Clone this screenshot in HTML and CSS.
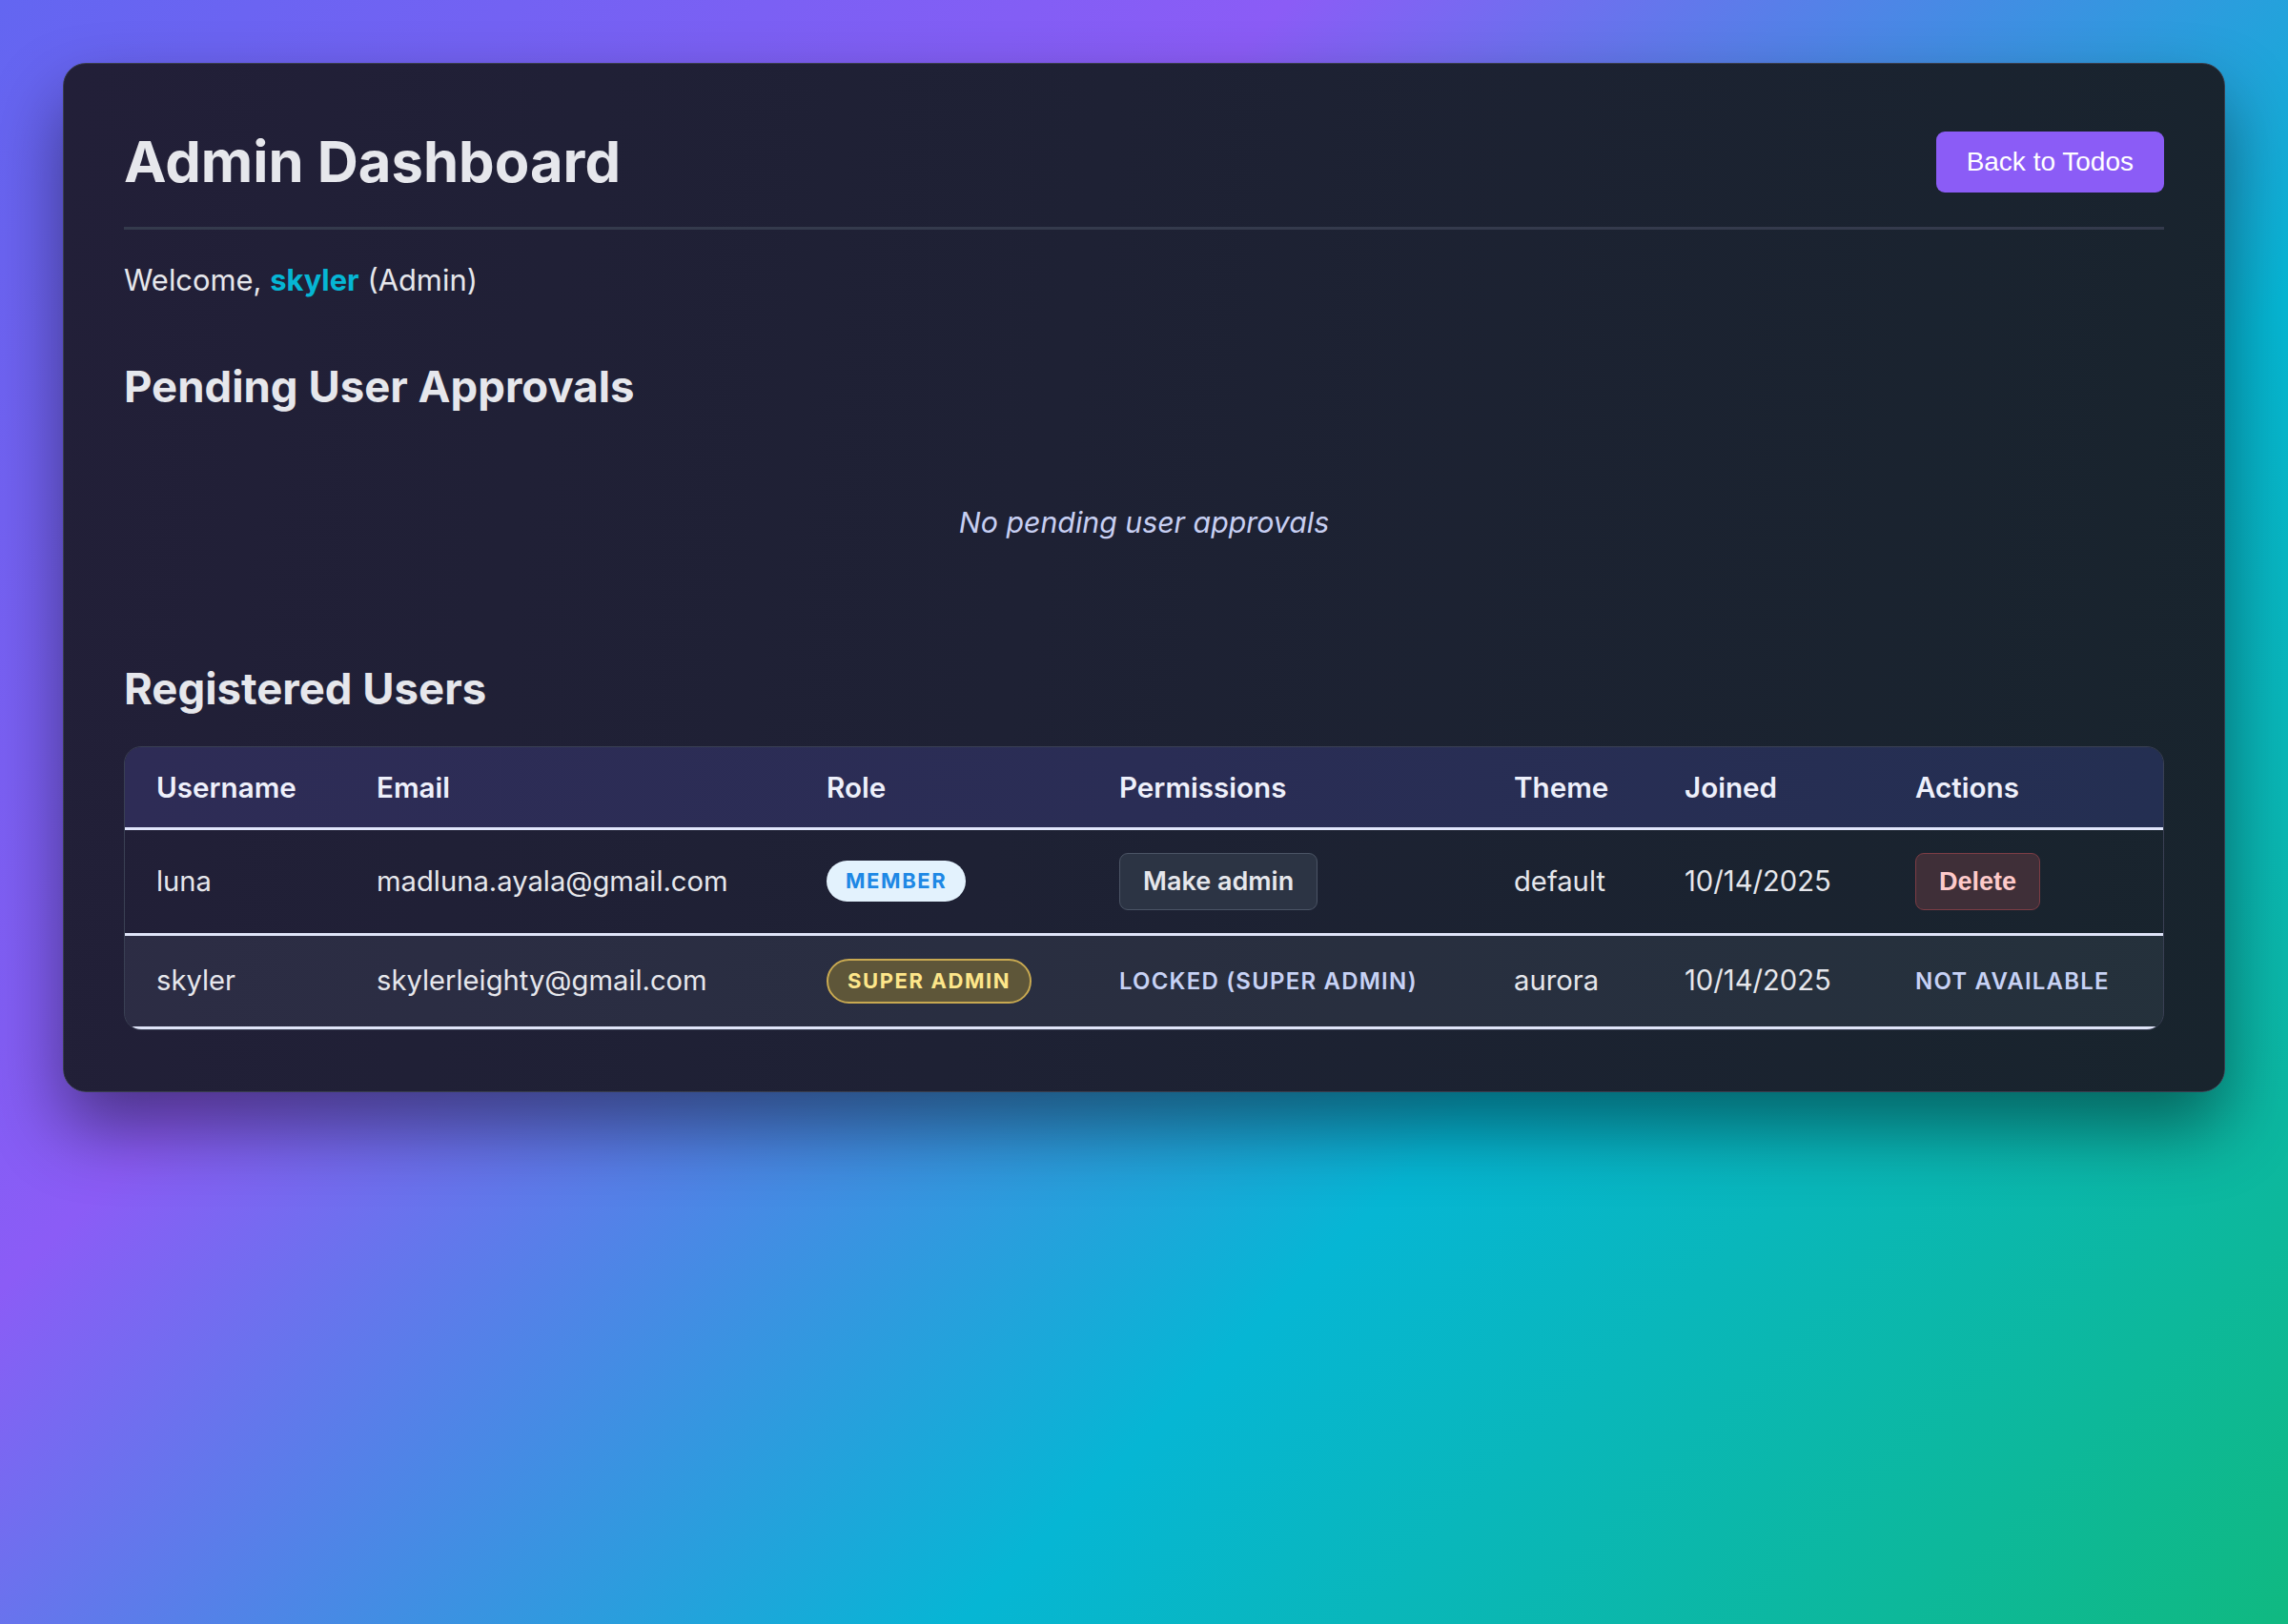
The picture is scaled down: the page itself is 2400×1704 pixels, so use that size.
FILE: index.html
```html
<!DOCTYPE html>
<html lang="en">
<head>
<meta charset="utf-8">
<title>Admin Dashboard</title>
<link rel="stylesheet" href="styles.css">
</head>
<body>
<main class="card">
  <header class="card-header">
    <h1 class="title">Admin Dashboard</h1>
    <button class="btn-back">Back to Todos</button>
  </header>
  <p class="welcome">Welcome, <span class="welcome-name">skyler</span> (Admin)</p>

  <section class="section">
    <h2 class="section-title">Pending User Approvals</h2>
    <p class="empty">No pending user approvals</p>
  </section>

  <section class="section section-users">
    <h2 class="section-title">Registered Users</h2>
    <div class="table-wrap">
      <table class="users">
        <colgroup>
          <col class="c-user"><col class="c-email"><col class="c-role"><col class="c-perm"><col class="c-theme"><col class="c-joined"><col class="c-actions">
        </colgroup>
        <thead>
          <tr>
            <th>Username</th><th>Email</th><th>Role</th><th>Permissions</th><th>Theme</th><th>Joined</th><th>Actions</th>
          </tr>
        </thead>
        <tbody>
          <tr>
            <td>luna</td>
            <td>madluna.ayala@gmail.com</td>
            <td><span class="badge badge-member">MEMBER</span></td>
            <td><button class="btn-make">Make admin</button></td>
            <td>default</td>
            <td>10/14/2025</td>
            <td><button class="btn-delete">Delete</button></td>
          </tr>
          <tr class="row-alt">
            <td>skyler</td>
            <td>skylerleighty@gmail.com</td>
            <td><span class="badge badge-super">SUPER ADMIN</span></td>
            <td><span class="locked">LOCKED (SUPER ADMIN)</span></td>
            <td>aurora</td>
            <td>10/14/2025</td>
            <td><span class="locked">NOT AVAILABLE</span></td>
          </tr>
        </tbody>
      </table>
    </div>
  </section>
</main>
</body>
</html>
```
FILE: styles.css
```css
* { box-sizing: border-box; }

html, body { margin: 0; }

body {
  min-height: 100vh;
  padding: 66px 66px;
  font-family: Inter, "Noto Sans", "Liberation Sans", sans-serif;
  color: #e5e7eb;
  background: linear-gradient(135deg, #6366f1 0%, #8b5cf6 33%, #06b6d4 66%, #10b981 100%);
}

.card {
  border: 1.5px solid #3a3e4e;
  border-radius: 24px;
  padding: 67px 63px 64px;
  background: linear-gradient(100deg, #221f38 0%, #1e2134 45%, #18242d 100%);
  box-shadow: 0 38px 75px rgba(0, 0, 0, 0.45);
}

.card-header {
  display: flex;
  align-items: center;
  justify-content: space-between;
  padding-bottom: 32px;
  border-bottom: 3px solid #343a4c;
}

.title {
  margin: 0;
  font-size: 59.7px;
  line-height: 1.2;
  font-weight: 700;
  color: #e6e7ec;
}

.btn-back {
  height: 64px;
  padding: 0 32px;
  border: none;
  border-radius: 9px;
  background: #8b5cf6;
  color: #ffffff;
  font-family: "Liberation Sans", Arial, sans-serif;
  font-size: 28px;
}

.welcome {
  margin: 31px 0 0;
  font-size: 30.9px;
  line-height: 43px;
  color: #e6e7ec;
}

.welcome-name {
  color: #06b6d4;
  font-weight: 700;
}

.section { margin-top: 64px; }

.section-title {
  margin: 0 0 32px;
  font-size: 45.5px;
  line-height: 1.2;
  font-weight: 700;
  color: #e6e7ec;
}

.empty {
  margin: 0;
  padding: 62px 0;
  text-align: center;
  font-style: italic;
  font-size: 30.3px;
  line-height: 43px;
  color: #c7cff2;
}

.table-wrap {
  border: 1.5px solid #3a4054;
  border-radius: 18px;
  overflow: hidden;
}

.users {
  width: 100%;
  border-collapse: collapse;
  table-layout: fixed;
}

.c-user { width: 231px; }
.c-email { width: 472px; }
.c-role { width: 307px; }
.c-perm { width: 414px; }
.c-theme { width: 179px; }
.c-joined { width: 242px; }
.c-actions { width: auto; }

.users thead tr {
  background: linear-gradient(90deg, #2e2c56 0%, #2a2d55 50%, #242f52 100%);
}

.users th {
  padding: 24px 20px 24px 33px;
  text-align: left;
  font-size: 29.6px;
  line-height: 36px;
  font-weight: 600;
  color: #eef0fb;
  border-bottom: 3px solid #e0e5fb;
}

.users td {
  padding: 24px 20px 24px 33px;
  font-size: 29.2px;
  line-height: 34px;
  color: #e6e7ec;
  border-bottom: 3px solid #dfe4f8;
  vertical-align: middle;
  white-space: nowrap;
}

.row-alt { background: rgba(148, 163, 184, 0.1); }

.badge {
  display: inline-block;
  padding: 8px 20px;
  border-radius: 999px;
  font-size: 22px;
  line-height: 27px;
  font-weight: 700;
  letter-spacing: 1.6px;
}

.badge-member {
  background: #e3f2fd;
  color: #1e88e5;
}

.badge-super {
  background: #5e5639;
  color: #fde68a;
  border: 2px solid #c8a951;
}

.btn-make {
  display: inline-block;
  padding: 12px 24px;
  border: 1.5px solid #4b5465;
  border-radius: 9px;
  background: #2c3444;
  color: #e6e7ec;
  font-family: Inter, "Noto Sans", sans-serif;
  font-size: 27px;
  line-height: 34px;
  font-weight: 600;
}

.btn-delete {
  display: inline-block;
  padding: 12px 24px;
  border: 1.5px solid #7d3d45;
  border-radius: 9px;
  background: #3f2f38;
  color: #fecaca;
  font-family: "Liberation Sans", Arial, sans-serif;
  font-size: 27px;
  line-height: 34px;
  font-weight: 700;
}

.locked {
  font-size: 24px;
  font-weight: 600;
  letter-spacing: 1.2px;
  color: #c7d2f5;
}
```
